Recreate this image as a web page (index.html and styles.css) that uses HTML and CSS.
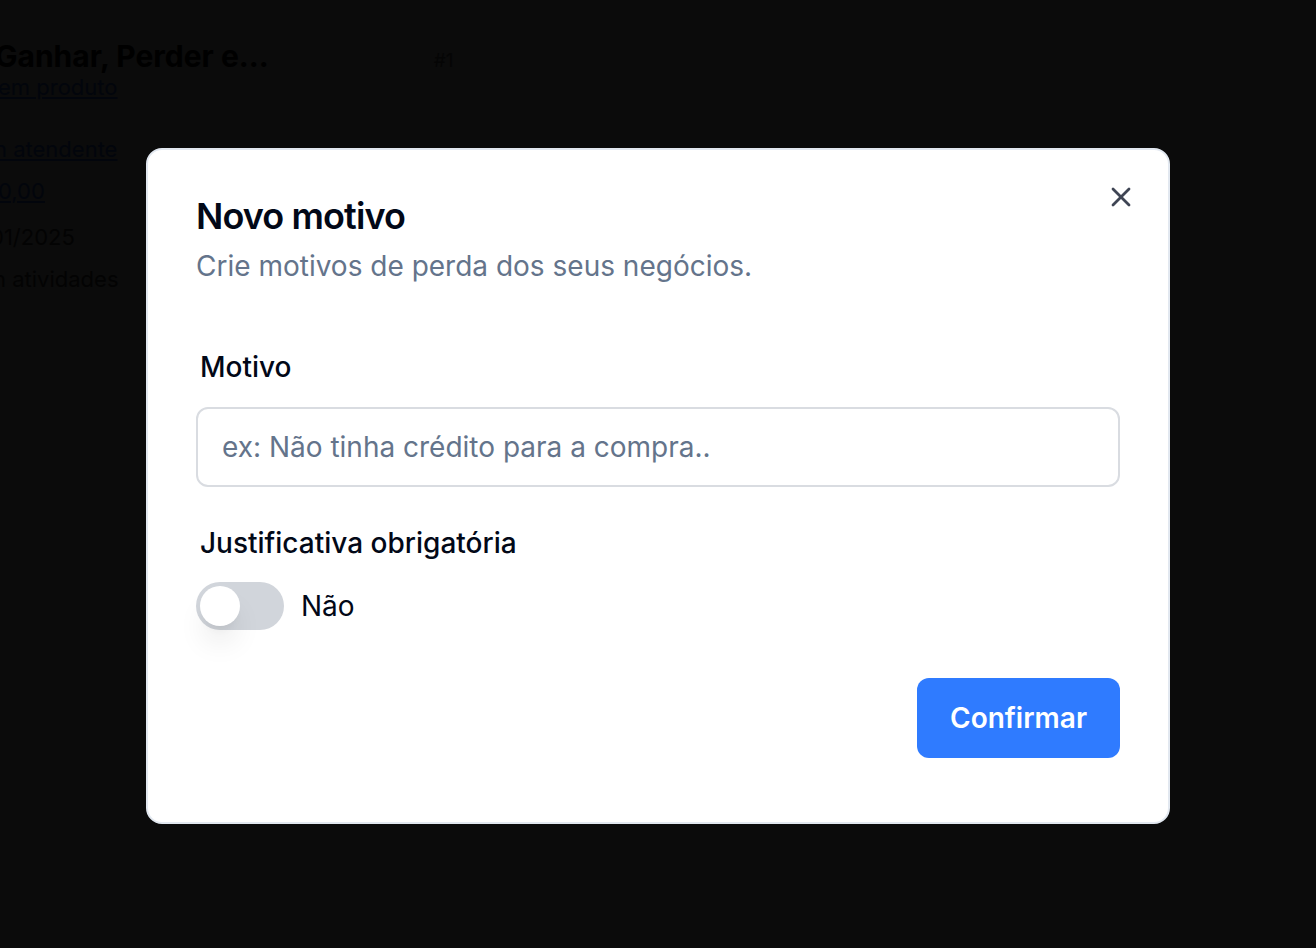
FILE: index.html
```html
<!DOCTYPE html>
<html lang="pt-BR">
<head>
<meta charset="utf-8">
<title>Novo motivo</title>
<link rel="stylesheet" href="styles.css">
</head>
<body>
<div class="page">
  <div class="page-head">
    <h1 class="page-title">Ganhar, Perder e...</h1>
    <span class="page-id">#1</span>
  </div>
  <a class="page-line line-product" href="#">em produto</a>
  <a class="page-line line-agent" href="#">n atendente</a>
  <a class="page-line line-value" href="#">0,00</a>
  <p class="page-line line-date">01/2025</p>
  <p class="page-line line-activities">n atividades</p>
</div>

<div class="overlay">
  <div class="dialog" role="dialog">
    <button class="close" aria-label="Fechar">
      <svg viewBox="0 0 24 24" width="32" height="32" fill="none" stroke="currentColor" stroke-width="2" stroke-linecap="round" stroke-linejoin="round"><path d="M18 6 6 18"/><path d="m6 6 12 12"/></svg>
    </button>
    <div class="dialog-header">
      <h2 class="dialog-title">Novo motivo</h2>
      <p class="dialog-desc">Crie motivos de perda dos seus negócios.</p>
    </div>
    <div class="form">
      <label class="label" for="motivo">Motivo</label>
      <input id="motivo" class="input" type="text" placeholder="ex: Não tinha crédito para a compra..">
      <span class="label label-two">Justificativa obrigatória</span>
      <div class="switch-row">
        <span class="switch"><span class="knob"></span></span>
        <span class="switch-text">Não</span>
      </div>
    </div>
    <div class="footer">
      <button class="btn">Confirmar</button>
    </div>
  </div>
</div>
</body>
</html>
```

FILE: styles.css
```css
* { box-sizing: border-box; }
html, body { margin: 0; padding: 0; }
body {
  background: #0b0b0b;
  font-family: Inter, "Noto Sans", "Liberation Sans", sans-serif;
  width: 1316px;
  height: 948px;
  overflow: hidden;
}

/* dimmed page behind the overlay */
.page {
  padding-top: 38px;
  color: #000;
  display: flex;
  flex-direction: column;
  align-items: flex-start;
}
.page-head {
  display: flex;
  align-items: baseline;
  gap: 165px;
  margin-left: -5px;
}
.page-title {
  margin: 0;
  font-size: 30px;
  font-weight: 700;
  line-height: 36px;
  color: #000;
}
.page-id {
  font-size: 19px;
  color: #050505;
}
.page-line {
  display: block;
  margin: 16px 0 0;
  font-size: 22px;
  line-height: 26px;
  color: #030303;
  white-space: nowrap;
}
a.page-line {
  color: #02050c;
  text-decoration: underline;
}
.line-product { margin-top: 0; margin-left: -2px; }
.line-agent { margin-top: 36px; margin-left: -6px; }
.line-value { margin-left: -2px; }
.line-date { margin-top: 20px; margin-left: -10px; }
.line-activities { margin-left: -7px; }

/* modal */
.overlay {
  position: fixed;
  inset: 0;
  display: flex;
  justify-content: center;
  align-items: flex-start;
  padding-top: 148px;
}
.dialog {
  position: relative;
  width: 1024px;
  background: #fff;
  border: 2px solid #e2e8f0;
  border-radius: 16px;
  padding: 48px 48px 64px;
  display: flex;
  flex-direction: column;
}
.close {
  position: absolute;
  top: 31px;
  right: 31px;
  width: 32px;
  height: 32px;
  padding: 0;
  border: 0;
  background: none;
  color: #3f4554;
  display: flex;
  align-items: center;
  justify-content: center;
}
.close svg { width: 32px; height: 32px; stroke-width: 2.1; }

.dialog-header {
  display: flex;
  flex-direction: column;
  gap: 12px;
}
.dialog-title {
  margin: 0;
  font-size: 36px;
  line-height: 36px;
  font-weight: 600;
  letter-spacing: -0.9px;
  color: #020817;
}
.dialog-desc {
  margin: 0;
  font-size: 28px;
  line-height: 40px;
  color: #64748b;
}

.form {
  display: flex;
  flex-direction: column;
  padding-top: 67px;
}
.label {
  font-size: 28px;
  line-height: 28px;
  font-weight: 500;
  color: #020817;
  padding-left: 4px;
}
.input {
  margin-top: 26px;
  height: 80px;
  width: 100%;
  border: 2px solid #d9dce1;
  border-radius: 12px;
  padding: 0 24px;
  font-family: inherit;
  font-size: 28px;
  color: #020817;
  background: #fff;
  outline: none;
}
.input::placeholder { color: #64748b; }
.label-two { margin-top: 42px; }

.switch-row {
  display: flex;
  align-items: center;
  gap: 17px;
  margin-top: 25px;
}
.switch {
  width: 88px;
  height: 48px;
  border-radius: 24px;
  background: #d1d5db;
  padding: 4px;
  display: flex;
  align-items: center;
}
.knob {
  width: 40px;
  height: 40px;
  border-radius: 50%;
  background: #fff;
  box-shadow: 0 20px 30px -6px rgba(0,0,0,0.12), 0 8px 12px -8px rgba(0,0,0,0.1);
}
.switch-text {
  font-size: 28px;
  line-height: 40px;
  color: #020817;
}

.footer {
  display: flex;
  justify-content: flex-end;
  margin-top: 48px;
}
.btn {
  height: 80px;
  padding: 0 33px;
  border: 0;
  border-radius: 12px;
  background: #2f7bff;
  color: #fff;
  font-family: inherit;
  font-size: 28px;
  font-weight: 600;
}
```
